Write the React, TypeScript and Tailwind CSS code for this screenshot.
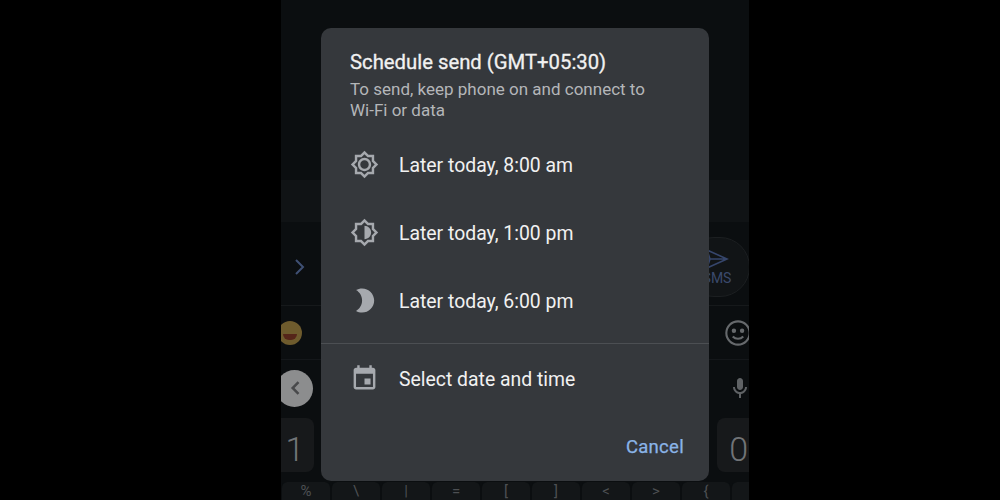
const rows = [
  {
    label: "Later today, 8:00 am",
    d: "M20 8.69V4h-4.69L12 .69 8.69 4H4v4.69L.69 12 4 15.31V20h4.69L12 23.31 15.31 20H20v-4.69L23.31 12 20 8.69zm-2 5.79V18h-3.52L12 20.48 9.52 18H6v-3.52L3.52 12 6 9.52V6h3.52L12 3.52 14.48 6H18v3.52L20.48 12 18 14.48zM12 6.5c-3.03 0-5.5 2.47-5.5 5.5s2.47 5.5 5.5 5.5 5.5-2.47 5.5-5.5-2.47-5.5-5.5-5.5zm0 9c-1.93 0-3.5-1.57-3.5-3.5s1.57-3.5 3.5-3.5 3.5 1.57 3.5 3.5-1.57 3.5-3.5 3.5z",
  },
  {
    label: "Later today, 1:00 pm",
    d: "M20 15.31L23.31 12 20 8.69V4h-4.69L12 .69 8.69 4H4v4.69L.69 12 4 15.31V20h4.69L12 23.31 15.31 20H20v-4.69zm-2-.83V18h-3.52L12 20.48 9.52 18H6v-3.52L3.52 12 6 9.52V6h3.52L12 3.52 14.48 6H18v3.52L20.48 12 18 14.48zM12 6.5v11c3.03 0 5.5-2.47 5.5-5.5S15.03 6.5 12 6.5z",
  },
  {
    label: "Later today, 6:00 pm",
    d: "M10 2c-1.82 0-3.53.5-5 1.35C7.99 5.08 10 8.3 10 12s-2.01 6.92-5 8.65C6.47 21.5 8.18 22 10 22c5.52 0 10-4.48 10-10S15.52 2 10 2z",
  },
];

const eventIcon =
  "M17 12h-5v5h5v-5zM16 1v2H8V1H6v2H5c-1.11 0-1.99.9-1.99 2L3 19c0 1.1.89 2 2 2h14c1.1 0 2-.9 2-2V5c0-1.1-.9-2-2-2h-1V1h-2zm3 18H5V8h14v11z";

function RowIcon({ d }: { d: string }) {
  return (
    <svg className="w-[29px] h-[29px] shrink-0 text-[#a6a9ae]" viewBox="0 0 24 24" fill="currentColor">
      <path d={d} />
    </svg>
  );
}

const symbols = ["%", "\\", "|", "=", "[", "]", "<", ">", "{", ""];

function Keyboard() {
  return (
    <div className="w-[468px] h-[500px] bg-[#0b0e10] flex flex-col overflow-hidden text-[#8b8e91]">
      <div className="h-[180px] shrink-0" />
      <div className="h-[42px] shrink-0 bg-[#101315]" />

      {/* compose row */}
      <div className="h-[84px] shrink-0 flex items-center justify-between pt-[6px] border-b border-[#16191b]">
        <svg className="w-[24px] h-[24px] ml-[7px] text-[#3f5074]" viewBox="0 0 24 24" fill="none" stroke="currentColor" strokeWidth="2">
          <path d="M8 5l7 7-7 7" />
        </svg>
        <div className="w-[66px] h-[60px] mr-[-1px] rounded-[30px] bg-[#111416] border border-[#1c1f21] flex flex-col items-center justify-center">
          <svg className="w-[28px] h-[24px] text-[#36466c]" viewBox="0 0 24 24" fill="none" stroke="currentColor" strokeWidth="1.6">
            <path d="M2 3l20 9-20 9 3-9zM5 12h17" />
          </svg>
          <span className="text-[14px] leading-[15px] text-[#3b4a6c] font-['Roboto',sans-serif]">SMS</span>
        </div>
      </div>

      {/* emoji row */}
      <div className="h-[54px] shrink-0 flex items-center justify-between border-b border-[#14171a]">
        <div className="w-[24px] h-[24px] ml-[-3px] rounded-full bg-[#6e5b2d] flex items-end justify-center pb-[5px]">
          <div className="w-[14px] h-[6px] rounded-b-full bg-[#552519]" />
        </div>
        <svg className="w-[28px] h-[28px] mr-[-3px] text-[#66696c]" viewBox="0 0 24 24" fill="none" stroke="currentColor" strokeWidth="1.8">
          <circle cx="12" cy="12" r="10" />
          <circle cx="8.5" cy="10" r="1" fill="currentColor" />
          <circle cx="15.5" cy="10" r="1" fill="currentColor" />
          <path d="M7.5 15c2.5 2.6 6.500 2.600 9 0" />
        </svg>
      </div>

      {/* back / mic row */}
      <div className="h-[56px] shrink-0 flex items-center justify-between">
        <div className="w-[37px] h-[37px] ml-[-5px] rounded-full bg-[#8c8d8e] flex items-center justify-center">
          <svg className="w-[20px] h-[20px] ml-[2px] text-[#48494b]" viewBox="0 0 24 24" fill="none" stroke="currentColor" strokeWidth="3">
            <path d="M15 5l-7 7 7 7" />
          </svg>
        </div>
        <svg className="w-[24px] h-[26px] mr-[-3px] text-[#5f6265]" viewBox="0 0 24 24" fill="currentColor">
          <path d="M12 14c1.66 0 3-1.340 3-3V5c0-1.660-1.340-3-3-3S9 3.340 9 5v6c0 1.660 1.340 3 3 3zm5-3c0 2.760-2.240 5-5 5s-5-2.240-5-5H5c0 3.530 2.610 6.430 6 6.920V22h2v-4.080c3.390-.49 6-3.390 6-6.920h-2z" />
        </svg>
      </div>

      {/* number row */}
      <div className="h-[54px] mt-[2px] shrink-0 flex justify-between font-['Roboto',sans-serif] font-light text-[34px] text-[#717477]">
        <div className="w-[33px] rounded-r-lg bg-[#17191b] flex items-center justify-center pr-[5px] pt-[8px]">1</div>
        <div className="w-[32px] rounded-l-lg bg-[#17191b] flex items-center justify-end pr-[1px] pt-[8px]">0</div>
      </div>

      {/* symbol row */}
      <div className="flex-1 mt-[10px] flex font-['Roboto',sans-serif] text-[15px] leading-[16px] text-[#4d5053]">
        {symbols.map((s, i) => (
          <div key={i} className="w-[50px] shrink-0 rounded-t-md bg-[#131618] border-x border-[#0b0e10] text-center pt-[1px]">
            {s}
          </div>
        ))}
      </div>
    </div>
  );
}

export default function App() {
  return (
    <div className="w-[1000px] h-[500px] bg-black pl-[281px] overflow-hidden">
      <div className="relative w-[468px] h-[500px]">
        <Keyboard />

        <div className="absolute left-[40px] top-[28px] w-[388px] h-[453px] rounded-[10px] bg-[#35383c] flex flex-col font-['Roboto',sans-serif]">
          <div className="pl-[29px] pt-[20px]">
            <h1 className="text-[20.300px] leading-[28px] text-[#f1f1f1] [-webkit-text-stroke:0.3px_#f1f1f1]">Schedule send (GMT+05:30)</h1>
            <p className="mt-[3px] text-[17px] leading-[21px] text-[#b4b6b9]">
              To send, keep phone on and connect to
              <br />
              Wi-Fi or data
            </p>
          </div>

          <div className="mt-[9px]">
            {rows.map((r) => (
              <div key={r.label} className="h-[68px] flex items-center gap-[20px] pl-[29px]">
                <RowIcon d={r.d} />
                <span className="pt-[3px] text-[19.400px] leading-[28px] text-[#f1f1f1]">{r.label}</span>
              </div>
            ))}
          </div>

          <div className="mt-[9px] border-t border-[#4c4f53]" />

          <div className="h-[69px] flex items-center gap-[20px] pl-[29px]">
            <RowIcon d={eventIcon} />
            <span className="pt-[2px] text-[19.400px] leading-[28px] text-[#f1f1f1]">Select date and time</span>
          </div>

          <div className="flex justify-end pr-[25px] pt-[20px]">
            <button className="text-[18.500px] leading-[28px] tracking-[0.3px] text-[#8ab4e8] [-webkit-text-stroke:0.25px_#8ab4e8]">Cancel</button>
          </div>
        </div>
      </div>
    </div>
  );
}
